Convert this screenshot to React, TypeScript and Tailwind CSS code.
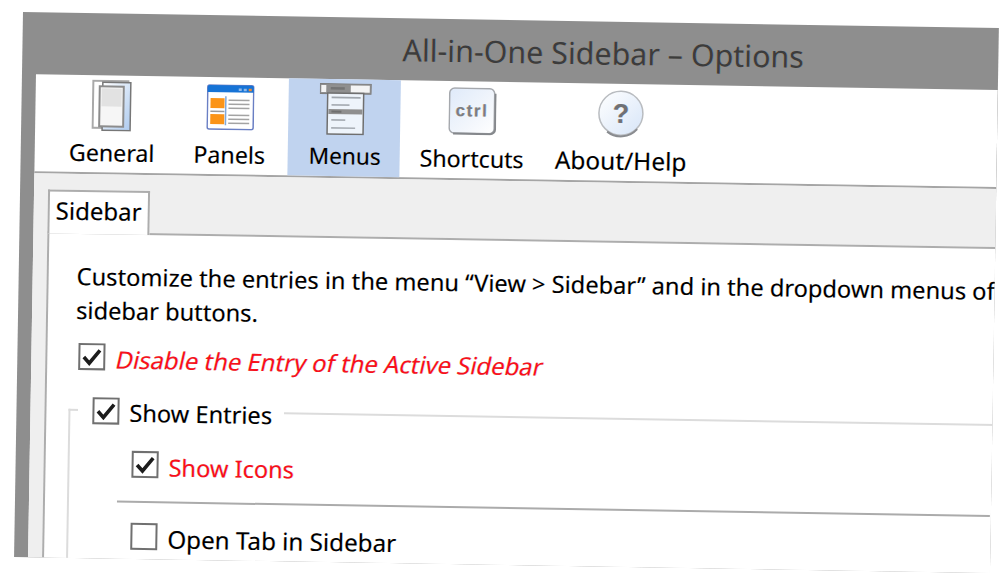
import React from "react";

const font = "[font-family:'Noto_Sans',sans-serif]";

function GeneralIcon() {
  return (
    <svg width="42" height="52" viewBox="0 0 42 52" className="block">
      <defs>
        <linearGradient id="gb" x1="0" y1="0" x2="1" y2="1">
          <stop offset="0" stopColor="#ffffff" />
          <stop offset="1" stopColor="#aecbef" />
        </linearGradient>
      </defs>
      <rect x="1.5" y="1.5" width="35" height="47" fill="#fff" stroke="#a9a9a9" strokeWidth="2" />
      <rect x="11" y="3" width="28" height="48" fill="url(#gb)" stroke="#777" strokeWidth="1.5" />
      <rect x="8" y="7" width="24" height="40" fill="#f6f6f6" stroke="#8c8c8c" strokeWidth="2" />
      <rect x="10" y="9" width="20" height="18" fill="#e2e2e2" />
    </svg>
  );
}

function PanelsIcon() {
  return (
    <svg width="48" height="46" viewBox="0 0 48 46" className="block">
      <rect x="1" y="1" width="46" height="44" rx="2" fill="#fff" stroke="#6a7fc4" strokeWidth="1.5" />
      <path d="M1 8V3a2 2 0 0 1 2-2h42a2 2 0 0 1 2 2v5z" fill="#1673d6" />
      <rect x="32" y="4" width="3" height="2.5" fill="#8fb8e8" />
      <rect x="37" y="4" width="3" height="2.5" fill="#8fb8e8" />
      <rect x="42" y="4" width="3" height="2.5" fill="#f08a30" />
      <rect x="4" y="14" width="14" height="10" fill="#fb9418" />
      <rect x="4" y="30" width="14" height="10" fill="#fb9418" />
      <rect x="4" y="26.5" width="14" height="1.5" fill="#9a9a9a" />
      <rect x="18.5" y="12" width="1.5" height="29" fill="#7fa8dc" />
      {[15, 19, 23, 30, 34, 38].map((y) => (
        <rect key={y} x="22" y={y} width="21" height="1.5" fill="#a3a3a3" />
      ))}
    </svg>
  );
}

function MenusIcon() {
  return (
    <svg width="52" height="52" viewBox="0 0 52 52" className="block">
      <rect x="0.5" y="0.5" width="51" height="10" fill="#8f8f8f" stroke="#7d7d7d" />
      <rect x="1.5" y="2" width="5" height="7" fill="#f4f4f4" />
      <rect x="11" y="4" width="14" height="2.5" fill="#747474" />
      <rect x="31" y="2" width="19" height="7" fill="#f4f4f4" />
      <rect x="8" y="10" width="36" height="41" fill="#eef4fb" stroke="#6f6f6f" strokeWidth="1.5" />
      <rect x="12" y="13.5" width="29" height="1.6" fill="#a0a6ad" />
      <rect x="12" y="21" width="18" height="1.6" fill="#a9afb6" />
      <rect x="9" y="26" width="34" height="5" fill="#8f8f8f" />
      <rect x="12" y="27.5" width="10" height="2" fill="#6f6f6f" />
      <rect x="12" y="36" width="14" height="1.6" fill="#a9afb6" />
      <rect x="12" y="44" width="24" height="1.6" fill="#a9afb6" />
    </svg>
  );
}

function CtrlIcon() {
  return (
    <svg width="48" height="48" viewBox="0 0 48 48" className="block">
      <defs>
        <linearGradient id="cb" x1="0" y1="0" x2="1" y2="1">
          <stop offset="0" stopColor="#dfeafa" />
          <stop offset="0.6" stopColor="#f2f6fc" />
          <stop offset="1" stopColor="#ffffff" />
        </linearGradient>
      </defs>
      <rect x="1" y="1" width="45" height="45" rx="5" fill="url(#cb)" stroke="#a5a8ad" strokeWidth="1.5" />
      <path d="M5 46.5h37a5 5 0 0 0 5-5V6" fill="none" stroke="#85888c" strokeWidth="2" />
      <text x="23.5" y="29" textAnchor="middle" fontFamily="'Liberation Sans', sans-serif" fontWeight="700" fontSize="17" letterSpacing="1.6" fill="#7c7e82">
        ctrl
      </text>
    </svg>
  );
}

function HelpIcon() {
  return (
    <svg width="48" height="48" viewBox="0 0 48 48" className="block">
      <defs>
        <linearGradient id="hb" x1="0" y1="0" x2="1" y2="1">
          <stop offset="0" stopColor="#ffffff" />
          <stop offset="1" stopColor="#d7e5f8" />
        </linearGradient>
      </defs>
      <circle cx="23.5" cy="23.5" r="22" fill="url(#hb)" stroke="#b9bcc0" strokeWidth="1.5" />
      <path d="M40 39a22 22 0 0 1-30 3" fill="none" stroke="#8a8c90" strokeWidth="2" />
      <text x="23.5" y="33" textAnchor="middle" fontFamily="'Liberation Sans', sans-serif" fontWeight="700" fontSize="27" fill="#6f7175">
        ?
      </text>
    </svg>
  );
}

function ToolItem({ label, width, icon, extra, size }: { label: string; width: string; icon: React.ReactNode; extra?: string; size?: string }) {
  return (
    <div className={`${width} h-full flex flex-col items-center ${extra ?? ""}`}>
      <div className="h-[54px] mt-[3px] flex items-center justify-center">{icon}</div>
      <div className={`${size ?? "text-[23.2px]"} mt-[4px] leading-[32px] text-black whitespace-nowrap`}>{label}</div>
    </div>
  );
}

function Check({ checked }: { checked?: boolean }) {
  return (
    <span className="w-[27px] h-[27px] shrink-0 border-2 border-[#707070] bg-white flex items-center justify-center">
      {checked && (
        <svg width="21" height="19" viewBox="0 0 21 19">
          <path d="M2.5 10l5.5 6L18.5 3" fill="none" stroke="#1c1c1c" strokeWidth="3.6" />
        </svg>
      )}
    </span>
  );
}

export default function App() {
  return (
    <div className={`w-[1000px] h-[577px] overflow-hidden bg-white pl-[22.5px] pt-[12px] ${font} [text-shadow:-0.5px_0_0_rgba(255,150,0,0.3),0.5px_0_0_rgba(0,130,255,0.3)]`}>
      <div className="w-[975.5px] h-[545px] overflow-hidden rotate-[0.94deg] origin-top-left flex flex-col bg-[#8e8e8e]">
        <div className="h-[62px] shrink-0 pl-[380px] pt-[12px] text-[30.4px] leading-[40px] text-[#3c3c3c] whitespace-nowrap">
          All-in-One Sidebar – Options
        </div>
        <div className="ml-[14px] flex-1 min-h-0 flex flex-col bg-white">
          <div className="h-[99px] shrink-0 flex pl-[17px] border-b-2 border-[#a5a5a5]">
            <ToolItem label="General" width="w-[120px]" icon={<GeneralIcon />} />
            <ToolItem label="Panels" width="w-[115px]" icon={<PanelsIcon />} />
            <ToolItem label="Menus" width="w-[112px]" icon={<MenusIcon />} extra="ml-[1px] pl-[2px] bg-[#c0d3ef]" size="text-[22.6px]" />
            <ToolItem label="Shortcuts" width="w-[144px]" icon={<CtrlIcon />} />
            <ToolItem label="About/Help" width="w-[154px]" icon={<HelpIcon />} size="text-[24.4px]" />
          </div>
          <div className="flex-1 min-h-0 flex flex-col bg-[#efefef] pl-[14px] pt-[16px]">
            <div className="w-[102px] h-[44px] bg-white border-2 border-b-0 border-[#adadad] text-[24px] leading-[38px] pl-[6px] text-black shrink-0 relative z-10 -mb-[2px]">
              Sidebar
            </div>
            <div className="flex-1 min-h-0 bg-white border-t-2 border-l-2 border-[#adadad] pl-[28px] pt-[25px] text-black">
              <p className="text-[23.65px] leading-[34px] whitespace-nowrap">
                Customize the entries in the menu “View &gt; Sidebar” and in the dropdown menus of
                <br />
                sidebar buttons.
              </p>
              <div className="flex items-start mt-[16px] ml-[3px]">
                <Check checked />
                <span className="inline-block -skew-x-12 ml-[11px] text-[23.85px] leading-[32px] text-[#f8101c] whitespace-nowrap">
                  Disable the Entry of the Active Sidebar
                </span>
              </div>
              <fieldset className="mt-[17px] -ml-[6px] border-t-2 border-l-2 border-[#dcdcdc] w-[1000px] h-[200px]">
                <legend className="ml-[8px] pl-[14px] pr-[12px]">
                  <span className="flex items-center text-[23.6px] leading-[32px] whitespace-nowrap">
                    <Check checked />
                    <span className="ml-[10px] mt-[4px]">Show Entries</span>
                  </span>
                </legend>
                <div className="flex items-center pl-[62px] mt-[17px]">
                  <Check checked />
                  <span className="ml-[10px] mt-[5px] text-[23.6px] leading-[32px] text-[#f8101c] whitespace-nowrap">Show Icons</span>
                </div>
                <div className="ml-[48px] mt-[18px] w-[873px] h-[2px] bg-[#ababab]" />
                <div className="flex items-center pl-[62px] mt-[15px]">
                  <Check />
                  <span className="ml-[10px] mt-[5px] text-[24.2px] leading-[32px] whitespace-nowrap">Open Tab in Sidebar</span>
                </div>
              </fieldset>
            </div>
          </div>
        </div>
      </div>
    </div>
  );
}
